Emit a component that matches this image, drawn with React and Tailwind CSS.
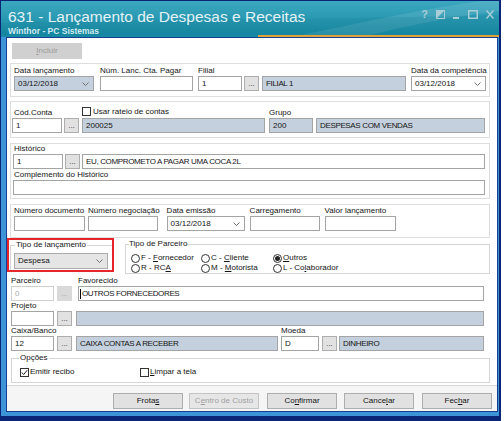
import React from "react";

const BLUE = "bg-[#c4d0dd]";

function Label({ children, className = "" }) {
  return <div className={`h-[10px] leading-[10px] whitespace-nowrap ${className}`}>{children}</div>;
}

function Input({ children, className = "" }) {
  return (
    <div className={`h-[15px] shrink-0 border flex items-center px-[3px] whitespace-nowrap overflow-hidden ${className.includes("border-[") ? "" : "border-[#a4a4a4]"} ${className}`}>
      {children}
    </div>
  );
}

function Caps({ children }) {
  return <span className="tracking-[-0.35px]">{children}</span>;
}

function Chevron() {
  return (
    <svg width="7" height="4" viewBox="0 0 7 4" className="shrink-0">
      <path d="M0.5 0.5 L3.5 3.5 L6.5 0.5" fill="none" stroke="#707070" strokeWidth="1" />
    </svg>
  );
}

function Combo({ children, className = "" }) {
  return (
    <Input className={`justify-between pr-[4px] ${className}`}>
      <span>{children}</span>
      <Chevron />
    </Input>
  );
}

function Dots({ disabled, className = "" }) {
  return (
    <div
      className={`w-[15px] h-[15px] shrink-0 flex items-center justify-center ${
        disabled ? "bg-[#d9d9d9] text-[#a6a6a6]" : "border border-[#adadad] bg-[#e1e1e1] text-[#333]"
      } ${className}`}
    >
      <span className="leading-none mt-[1px]">...</span>
    </div>
  );
}

function Checkbox({ checked }) {
  return (
    <div className="w-[9px] h-[9px] shrink-0 border border-[#333] bg-white flex items-center justify-center">
      {checked && (
        <svg width="7" height="7" viewBox="0 0 7 7">
          <path d="M0.8 3.6 L2.7 5.5 L6.2 1.2" fill="none" stroke="#222" strokeWidth="1" />
        </svg>
      )}
    </div>
  );
}

function Radio({ checked }) {
  return (
    <div className="w-[9px] h-[9px] shrink-0 rounded-full border border-[#333] bg-white flex items-center justify-center">
      {checked && <div className="w-[5px] h-[5px] rounded-full bg-[#222]" />}
    </div>
  );
}

function RadioItem({ checked, children }) {
  return (
    <div className="flex items-center h-[10px]">
      <Radio checked={checked} />
      <span className="ml-[1px] whitespace-nowrap">{children}</span>
    </div>
  );
}

function Btn({ children, disabled, className = "" }) {
  return (
    <div
      className={`w-[70px] h-[16px] shrink-0 border flex items-center justify-center ${
        disabled ? "border-[#c4c4c4] bg-[#e6e6e6] text-[#a0a0a0]" : "border-[#adadad] bg-[#e1e1e1]"
      } ${className}`}
    >
      {children}
    </div>
  );
}

function TitleBar() {
  return (
    <div className="h-[34px] shrink-0 relative overflow-hidden bg-gradient-to-b from-[#3ba8c0] to-[#168aa4] flex items-start pl-[7px] pr-[5px] pt-[7px]">
      <svg className="absolute inset-0" width="498" height="34" viewBox="0 0 498 34">
        <path d="M300 34 C360 22 420 8 480 0 L498 0 L498 10 C450 16 400 26 370 34 Z" fill="#ffffff" opacity="0.1" />
        <path d="M0 22 C120 18 260 20 498 14 L498 34 L0 34 Z" fill="#0b6f88" opacity="0.15" />
      </svg>
      <div className="relative flex flex-col">
        <div className="text-[15.5px] leading-[18px] text-[#e4f2f6] whitespace-nowrap">631 - Lançamento de Despesas e Receitas</div>
        <div className="text-[8.5px] leading-[10px] font-bold text-[#d2eaf1] whitespace-nowrap">Winthor - PC Sistemas</div>
      </div>
      <div className="relative ml-auto mt-[2px] flex items-center h-[9px] text-[#a9cdd6]">
        <span className="text-[11px] font-bold leading-[9px]">?</span>
        <svg className="ml-[8px]" width="9" height="9" viewBox="0 0 9 9">
          <rect x="0.5" y="0.5" width="8" height="8" fill="none" stroke="#a9cdd6" />
          <path d="M0.5 8.5 L8.5 0.5 L0.5 0.5 Z" fill="#a9cdd6" />
        </svg>
        <svg className="ml-[8px]" width="6" height="9" viewBox="0 0 6 9">
          <rect x="0" y="7" width="6" height="2" fill="#a9cdd6" />
        </svg>
        <svg className="ml-[9px]" width="10" height="9" viewBox="0 0 10 9">
          <rect x="0.75" y="0.75" width="8.5" height="7.5" fill="none" stroke="#a9cdd6" strokeWidth="1.5" />
        </svg>
        <svg className="ml-[8px]" width="8" height="9" viewBox="0 0 8 9">
          <path d="M0.5 0.5 L7.5 8.5 M7.5 0.5 L0.5 8.5" stroke="#a9cdd6" strokeWidth="1.5" />
        </svg>
      </div>
    </div>
  );
}

export default function App() {
  return (
    <div className="w-[504px] h-[421px] bg-white font-['Liberation_Sans',Arial,sans-serif] text-[8px] leading-[10px] text-[#141414]">
      <div className="w-[501px] h-[421px] bg-[#0b2677] pt-[1px] pl-[1px] pr-[2px] pb-[5px] flex flex-col">
        <TitleBar />
        <div className="h-[2px] shrink-0 flex">
          <div className="w-[257px] bg-[#1689a3]" />
          <div className="flex-1 bg-[#dfa236]" />
        </div>
        <div className="flex-1 min-h-0 bg-[#3d95d8] pl-[5px] pr-[1px] pb-[4px] flex">
          <div className="flex-1 border border-[#173f91] bg-white flex flex-col">
            {/* toolbar */}
            <div className="ml-[5px] mt-[5px] w-[70px] h-[16px] shrink-0 bg-[#d0d0d0] text-[#9a9a9a] flex items-center justify-center">
              <span><u>I</u>ncluir</span>
            </div>

            {/* datas / filial */}
            <div className="ml-[3px] mt-[4px] w-[480px] h-[34px] shrink-0 border border-[#dedede] flex pl-[3px] pt-[2px]">
              <div className="flex flex-col">
                <Label>Data lançamento</Label>
                <Combo className={`w-[80px] ${BLUE}`}>03/12/2018</Combo>
              </div>
              <div className="flex flex-col ml-[6px]">
                <Label>Núm. Lanc. Cta. Pagar</Label>
                <Input className="w-[93px] bg-white" />
              </div>
              <div className="flex flex-col ml-[5px]">
                <Label>Filial</Label>
                <div className="flex">
                  <Input className="w-[44px] bg-white">1</Input>
                  <Dots className="ml-[2px]" />
                  <Input className={`ml-[3px] w-[144px] ${BLUE}`}><Caps>FILIAL 1</Caps></Input>
                </div>
              </div>
              <div className="flex flex-col ml-[5px]">
                <Label>Data da competência</Label>
                <Combo className="w-[75px] bg-white">03/12/2018</Combo>
              </div>
            </div>

            {/* conta / grupo */}
            <div className="ml-[3px] mt-[4px] w-[480px] h-[37px] shrink-0 border border-[#dedede] flex items-end pl-[1px] pb-[4px]">
              <div className="flex flex-col">
                <Label className="pl-[2px]">Cód.Conta</Label>
                <Input className="w-[50px] bg-white">1</Input>
              </div>
              <Dots className="ml-[2px]" />
              <div className="flex flex-col ml-[3px]">
                <div className="flex items-start h-[12px] pt-[1px]">
                  <Checkbox />
                  <span className="ml-[2px] leading-[9px]">Usar rateio de contas</span>
                </div>
                <Input className={`w-[183px] ${BLUE}`}>200025</Input>
              </div>
              <div className="flex flex-col ml-[4px]">
                <Label>Grupo</Label>
                <div className="flex">
                  <Input className={`w-[44px] ${BLUE}`}>200</Input>
                  <Input className={`ml-[3px] w-[169px] ${BLUE}`}><Caps>DESPESAS COM VENDAS</Caps></Input>
                </div>
              </div>
            </div>

            {/* histórico */}
            <div className="ml-[3px] mt-[5px] w-[480px] h-[56px] shrink-0 border border-[#dedede] flex flex-col pl-[2px]">
              <Label className="pl-[1px]">Histórico</Label>
              <div className="flex">
                <Input className="w-[50px] bg-white">1</Input>
                <Dots className="ml-[2px]" />
                <Input className="ml-[2px] w-[403px] bg-white"><Caps>EU, COMPROMETO A PAGAR UMA COCA 2L</Caps></Input>
              </div>
              <Label className="mt-[1px] pl-[1px]">Complemento do Histórico</Label>
              <Input className="w-[472px] bg-white" />
            </div>

            {/* documento */}
            <div className="ml-[3px] mt-[5px] w-[480px] h-[34px] shrink-0 border border-[#dedede] flex pl-[3px] pt-[1px]">
              <div className="flex flex-col">
                <Label>Número documento</Label>
                <Input className="w-[71px] bg-white" />
              </div>
              <div className="flex flex-col ml-[3px]">
                <Label>Número negociação</Label>
                <Input className="w-[70px] bg-white" />
              </div>
              <div className="flex flex-col ml-[7px]">
                <Label>Data emissão</Label>
                <Combo className="w-[78px] bg-white">03/12/2018</Combo>
              </div>
              <div className="flex flex-col ml-[5px]">
                <Label>Carregamento</Label>
                <Input className="w-[70px] bg-white" />
              </div>
              <div className="flex flex-col ml-[5px]">
                <Label>Valor lançamento</Label>
                <Input className="w-[71px] bg-white" />
              </div>
            </div>

            {/* tipo de lançamento / parceiro */}
            <div className="flex items-start shrink-0">
              <div className="w-[107px] h-[34px] shrink-0 border-2 border-[#e4262c] pl-[1px]">
                <fieldset className="w-[102px] h-[30px] border-t border-l border-[#d5d5d5]">
                  <legend className="ml-[4px] px-[1px] leading-[10px]">Tipo de lançamento</legend>
                  <Combo className="ml-[3px] mt-[3px] w-[94px] h-[16px] bg-[#e5e5e5] border-[#acacac]">Despesa</Combo>
                </fieldset>
              </div>
              <fieldset className="ml-[11px] mt-[1px] w-[365px] h-[35px] border border-[#d5d5d5]">
                <legend className="ml-[3px] leading-[10px]">Tipo de Parceiro</legend>
                <div className="pl-[5px] mt-[4px] grid grid-cols-[70px_72px_120px]">
                  <RadioItem>F - <u>F</u>ornecedor</RadioItem>
                  <RadioItem>C - <u>C</u>liente</RadioItem>
                  <RadioItem checked><u>O</u>utros</RadioItem>
                  <RadioItem>R - RC<u>A</u></RadioItem>
                  <RadioItem>M - <u>M</u>otorista</RadioItem>
                  <RadioItem>L - Co<u>l</u>aborador</RadioItem>
                </div>
              </fieldset>
            </div>

            {/* parceiro */}
            <div className="flex ml-[4px] mt-[2px] shrink-0">
              <div className="flex flex-col">
                <Label>Parceiro</Label>
                <div className="flex">
                  <Input className="w-[43px] bg-white border-[#cfcfcf] text-[#a8a8a8]">0</Input>
                  <Dots disabled className="ml-[3px]" />
                </div>
              </div>
              <div className="flex flex-col ml-[6px]">
                <Label>Favorecido</Label>
                <Input className="w-[406px] bg-white pl-[1px]">
                  <span className="w-[1px] h-[10px] bg-black mr-[1px]" />
                  <Caps>OUTROS FORNECEDORES</Caps>
                </Input>
              </div>
            </div>

            {/* projeto */}
            <div className="flex flex-col ml-[4px] shrink-0">
              <Label>Projeto</Label>
              <div className="flex">
                <Input className="w-[43px] bg-white" />
                <Dots className="ml-[3px]" />
                <Input className={`ml-[4px] w-[408px] ${BLUE}`} />
              </div>
            </div>

            {/* caixa / moeda */}
            <div className="flex ml-[4px] shrink-0">
              <div className="flex flex-col">
                <Label>Caixa/Banco</Label>
                <div className="flex">
                  <Input className="w-[43px] bg-white">12</Input>
                  <Dots className="ml-[3px]" />
                  <Input className={`ml-[4px] w-[202px] ${BLUE}`}><Caps>CAIXA CONTAS A RECEBER</Caps></Input>
                </div>
              </div>
              <div className="flex flex-col ml-[3px]">
                <Label>Moeda</Label>
                <div className="flex">
                  <Input className="w-[38px] bg-white">D</Input>
                  <Dots className="ml-[3px]" />
                  <Input className={`ml-[2px] w-[145px] ${BLUE}`}><Caps>DINHEIRO</Caps></Input>
                </div>
              </div>
            </div>

            {/* opções */}
            <fieldset className="ml-[4px] mt-[2px] w-[479px] h-[30px] shrink-0 border border-[#d5d5d5]">
              <legend className="ml-[7px] px-[1px] leading-[10px]">Opções</legend>
              <div className="flex items-center mt-[4px] pl-[8px]">
                <div className="w-[120px] flex items-center">
                  <Checkbox checked />
                  <span className="ml-[1px]">Emitir recibo</span>
                </div>
                <div className="flex items-center">
                  <Checkbox />
                  <span className="ml-[1px]"><u>L</u>impar a tela</span>
                </div>
              </div>
            </fieldset>

            {/* rodapé */}
            <div className="mt-[2px] flex-1 border-t border-[#d6d6d6] bg-[#f5f5f5] flex items-start pt-[7px]">
              <Btn className="ml-[106px]">Frota<u>s</u></Btn>
              <Btn disabled className="ml-[6px]">C<u>e</u>ntro de Custo</Btn>
              <Btn className="ml-[8px]">Co<u>n</u>firmar</Btn>
              <Btn className="ml-[7px]">Cance<u>l</u>ar</Btn>
              <Btn className="ml-[8px]">Fec<u>h</u>ar</Btn>
            </div>
          </div>
        </div>
      </div>
    </div>
  );
}
